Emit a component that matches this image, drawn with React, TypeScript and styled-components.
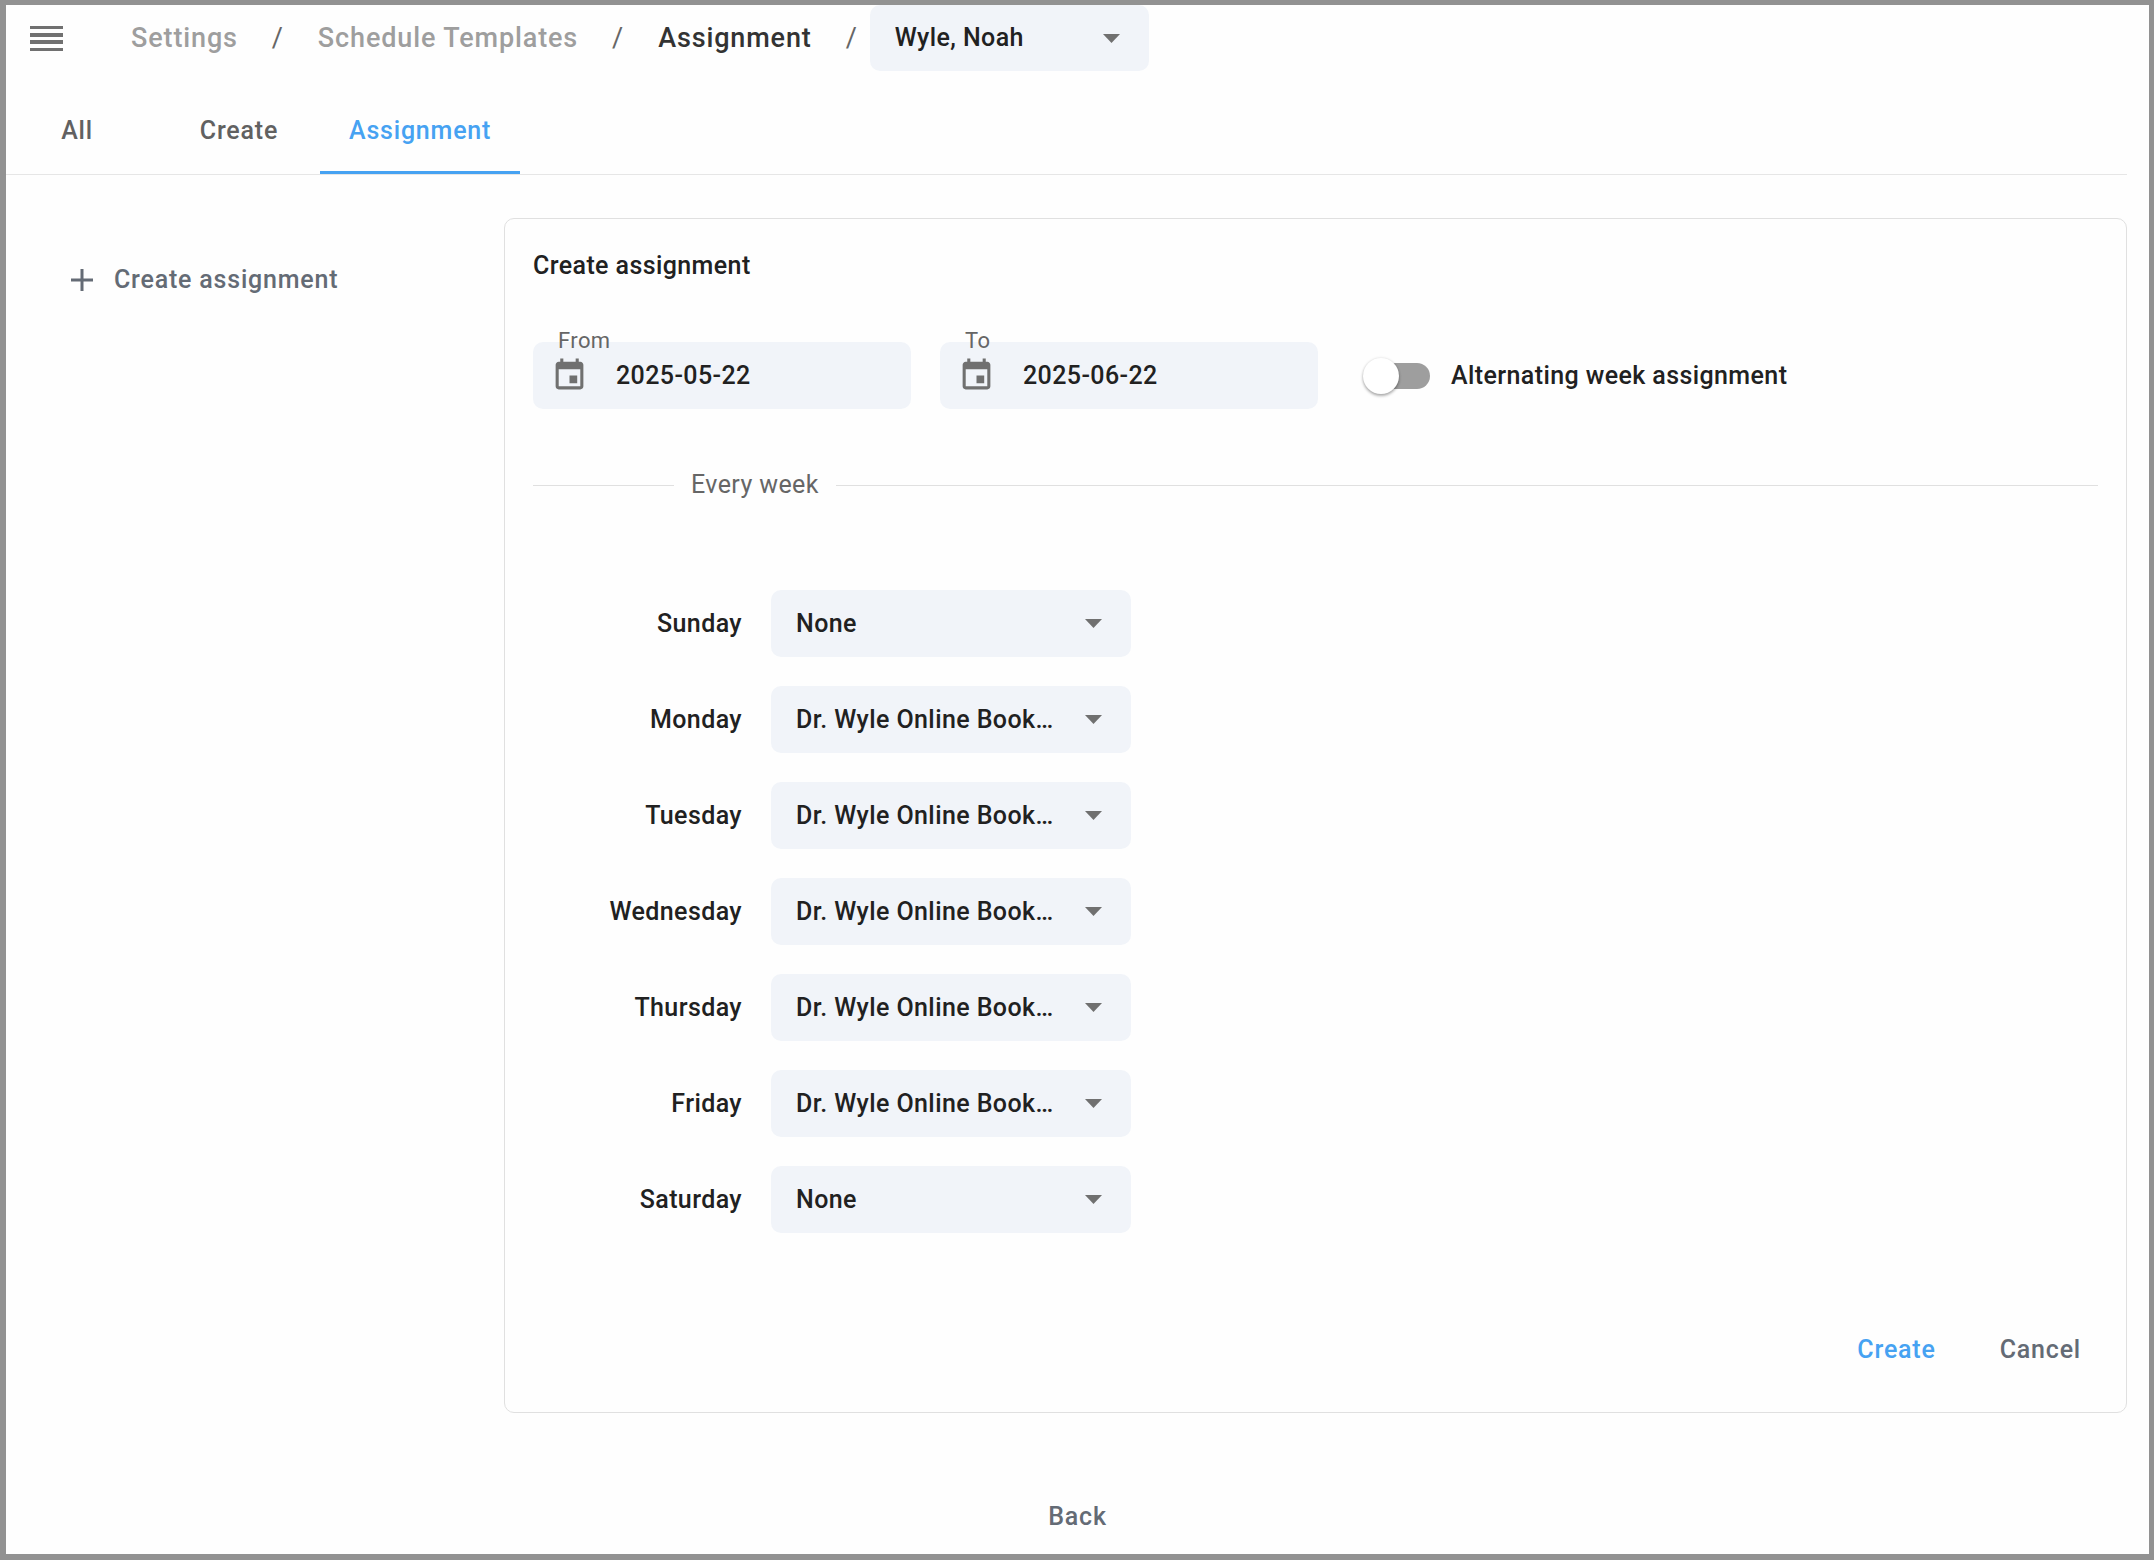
import React, { useId, useState } from "react";
import styled, { createGlobalStyle } from "styled-components";

const color = {
  frame: "#929292",
  page: "#fefefe",
  line: "#e0e0e0",
  field: "#f1f4f9",
  text: "#212121",
  heading: "#333333",
  muted: "#666666",
  faint: "#9e9e9e",
  icon: "#707070",
  button: "#646b75",
  accent: "#46a2f2",
};

// Tracking of the type scale: body copy, and navigation or button labels.
const tracking = {
  body: "0.016em",
  label: "0.032em",
};

const GlobalStyle = createGlobalStyle`
  * { box-sizing: border-box; }
  body {
    margin: 0;
    background: ${color.page};
    color: ${color.text};
    font: 500 25px/36px Roboto, "Liberation Sans", sans-serif;
    letter-spacing: ${tracking.body};
  }
  button, input, select { font: inherit; color: inherit; letter-spacing: inherit; }
`;

const Page = styled.div`
  display: flex;
  flex-direction: column;
  min-height: 100vh;
  border: solid ${color.frame};
  border-width: 5px 5px 6px 6px;
`;

const Header = styled.header`
  display: flex;
  align-items: center;
  padding-left: 24px;
`;

const MenuButton = styled.button`
  display: flex;
  padding: 0;
  border: 0;
  background: none;
  color: ${color.icon};
  margin-right: 68px;
  cursor: pointer;
`;

const Crumbs = styled.nav`
  display: flex;
  align-items: center;
  gap: 34px;
  margin-right: 12px;
  font-size: 27px;
  letter-spacing: ${tracking.label};
`;

const CrumbLink = styled.a`
  color: ${color.faint};
  text-decoration: none;
`;

const CrumbCurrent = styled.span`
  color: ${color.heading};
`;

const Slash = styled.span`
  color: ${color.muted};
  font-weight: 400;
`;

const Tabs = styled.div`
  margin: 17px 22px 0 0;
  border-bottom: 1px solid #e6e6e6;
`;

const TabList = styled.div`
  display: flex;
  margin-left: -10px;
`;

const Tab = styled.button<{ $active?: boolean }>`
  min-width: 162px;
  height: 86px;
  padding: 3px 29px 0;
  border: 0;
  border-bottom: 3px solid ${(p) => (p.$active ? color.accent : "transparent")};
  background: none;
  color: ${(p) => (p.$active ? color.accent : "#616161")};
  letter-spacing: ${tracking.label};
  cursor: pointer;
`;

const Body = styled.div`
  display: grid;
  grid-template-columns: 498px minmax(0, 1fr);
  padding: 43px 22px 0 0;
`;

const Sidebar = styled.aside`
  padding: 29px 0 0 48px;
`;

const TextButton = styled.button<{ $accent?: boolean }>`
  display: inline-flex;
  align-items: center;
  gap: 21px;
  height: 65px;
  padding: 0 17px;
  border: 0;
  border-radius: 10px;
  background: none;
  color: ${(p) => (p.$accent ? color.accent : color.button)};
  letter-spacing: ${tracking.label};
  cursor: pointer;
`;

const Card = styled.form`
  padding: 29px 28px 30px;
  border: 1px solid ${color.line};
  border-radius: 10px;
`;

const CardTitle = styled.h2`
  margin: 0 0 58px;
  font: inherit;
`;

const FieldRow = styled.div`
  display: flex;
  align-items: center;
  gap: 29px;
`;

const Field = styled.div`
  position: relative;
  display: flex;
  align-items: center;
  gap: 28px;
  width: 378px;
  height: 67px;
  padding: 0 18px;
  border-radius: 10px;
  background: ${color.field};
  color: ${color.icon};
`;

const FieldLabel = styled.label`
  position: absolute;
  top: -13px;
  left: 25px;
  color: ${color.muted};
  font-size: 22px;
  font-weight: 400;
  line-height: 24px;
`;

const FieldInput = styled.input`
  flex: 1;
  min-width: 0;
  padding: 0;
  border: 0;
  outline: 0;
  background: none;
  color: ${color.text};
`;

const SwitchLabel = styled.label`
  display: flex;
  align-items: center;
  gap: 21px;
  padding-left: 18px;
  cursor: pointer;
`;

const Switch = styled.input`
  appearance: none;
  position: relative;
  width: 65px;
  height: 26px;
  margin: 0;
  border-radius: 13px;
  background: ${color.faint};
  cursor: pointer;

  &::before {
    content: "";
    position: absolute;
    top: -5px;
    left: -2px;
    width: 36px;
    height: 36px;
    border-radius: 50%;
    background: #fff;
    box-shadow: 0 2px 3px rgba(0, 0, 0, 0.3), 0 0 3px rgba(0, 0, 0, 0.12);
  }

  &:checked {
    background: ${color.accent};
  }

  &:checked::before {
    left: 31px;
  }
`;

const Divider = styled.div`
  display: flex;
  align-items: center;
  gap: 17px;
  margin: 58px 0 87px;
  color: ${color.muted};
  font-weight: 400;

  &::before,
  &::after {
    content: "";
    height: 1px;
    background: ${color.line};
  }

  &::before {
    width: 141px;
  }

  &::after {
    flex: 1;
  }
`;

const DayGrid = styled.div`
  display: grid;
  grid-template-columns: 209px 360px;
  gap: 29px;
  align-items: center;
`;

const DayLabel = styled.label`
  text-align: right;
`;

const SelectBox = styled.div<{ $width: number }>`
  position: relative;
  width: ${(p) => p.$width}px;
  color: ${color.icon};

  svg {
    position: absolute;
    top: 29px;
    right: 29px;
    pointer-events: none;
  }
`;

const SelectControl = styled.select<{ $height: number }>`
  display: block;
  appearance: none;
  width: 100%;
  height: ${(p) => p.$height}px;
  padding: 0 76px 0 25px;
  border: 0;
  border-radius: 10px;
  background: ${color.field};
  color: ${color.text};
  overflow: hidden;
  text-overflow: ellipsis;
  white-space: nowrap;
  cursor: pointer;
`;

const Actions = styled.div`
  display: flex;
  justify-content: flex-end;
  gap: 30px;
  margin-top: 84px;
`;

const Footer = styled.footer`
  display: flex;
  justify-content: center;
  padding-top: 71px;
`;

function MenuIcon() {
  return (
    <svg width="33" height="25" viewBox="0 0 33 25" fill="currentColor" aria-hidden="true">
      <path d="M0 0h33v3H0zM0 7h33v4H0zM0 14h33v4H0zM0 22h33v3H0z" />
    </svg>
  );
}

function PlusIcon() {
  return (
    <svg width="22" height="22" viewBox="0 0 22 22" fill="currentColor" aria-hidden="true">
      <path d="M9.5 0h3v9.5H22v3h-9.5V22h-3v-9.5H0v-3h9.5z" />
    </svg>
  );
}

function CalendarIcon() {
  return (
    <svg width="37" height="37" viewBox="0 0 24 24" fill="currentColor" aria-hidden="true">
      <path d="M17 12h-5v5h5v-5zM16 1v2H8V1H6v2H5c-1.11 0-1.99.9-1.99 2L3 19c0 1.1.89 2 2 2h14c1.1 0 2-.9 2-2V5c0-1.1-.9-2-2-2h-1V1h-2zm3 18H5V8h14v11z" />
    </svg>
  );
}

function ArrowIcon() {
  return (
    <svg width="17" height="9" viewBox="0 0 17 9" fill="currentColor" aria-hidden="true">
      <path d="M0 0h17L8.5 9z" />
    </svg>
  );
}

type DropdownProps = {
  id?: string;
  label?: string;
  width: number;
  height?: number;
  options: string[];
  initial: string;
};

function Dropdown({ id, label, width, height = 67, options, initial }: DropdownProps) {
  return (
    <SelectBox $width={width}>
      <SelectControl id={id} aria-label={label} $height={height} defaultValue={initial}>
        {options.map((option) => (
          <option key={option}>{option}</option>
        ))}
      </SelectControl>
      <ArrowIcon />
    </SelectBox>
  );
}

function DateField({ label, initial }: { label: string; initial: string }) {
  const id = useId();
  const [value, setValue] = useState(initial);
  return (
    <Field>
      <FieldLabel htmlFor={id}>{label}</FieldLabel>
      <CalendarIcon />
      <FieldInput id={id} type="text" value={value} onChange={(e) => setValue(e.target.value)} />
    </Field>
  );
}

const NONE = "None";
const ONLINE = "Dr. Wyle Online Booking";

const days = [
  { name: "Sunday", template: NONE },
  { name: "Monday", template: ONLINE },
  { name: "Tuesday", template: ONLINE },
  { name: "Wednesday", template: ONLINE },
  { name: "Thursday", template: ONLINE },
  { name: "Friday", template: ONLINE },
  { name: "Saturday", template: NONE },
];

const tabs = ["All", "Create", "Assignment"];

export default function App() {
  const [activeTab, setActiveTab] = useState("Assignment");

  return (
    <Page>
      <GlobalStyle />
      <Header>
        <MenuButton type="button" aria-label="Menu">
          <MenuIcon />
        </MenuButton>
        <Crumbs aria-label="Breadcrumb">
          <CrumbLink href="#settings">Settings</CrumbLink>
          <Slash>/</Slash>
          <CrumbLink href="#templates">Schedule Templates</CrumbLink>
          <Slash>/</Slash>
          <CrumbCurrent>Assignment</CrumbCurrent>
          <Slash>/</Slash>
        </Crumbs>
        <Dropdown label="Provider" width={279} height={66} options={["Wyle, Noah"]} initial="Wyle, Noah" />
      </Header>

      <Tabs>
        <TabList role="tablist">
          {tabs.map((tab) => (
            <Tab
              key={tab}
              type="button"
              role="tab"
              aria-selected={tab === activeTab}
              $active={tab === activeTab}
              onClick={() => setActiveTab(tab)}
            >
              {tab}
            </Tab>
          ))}
        </TabList>
      </Tabs>

      <Body>
        <Sidebar>
          <TextButton type="button">
            <PlusIcon />
            Create assignment
          </TextButton>
        </Sidebar>

        <Card onSubmit={(e) => e.preventDefault()}>
          <CardTitle>Create assignment</CardTitle>
          <FieldRow>
            <DateField label="From" initial="2025-05-22" />
            <DateField label="To" initial="2025-06-22" />
            <SwitchLabel>
              <Switch type="checkbox" role="switch" />
              Alternating week assignment
            </SwitchLabel>
          </FieldRow>

          <Divider>Every week</Divider>

          <DayGrid>
            {days.map((day) => (
              <React.Fragment key={day.name}>
                <DayLabel htmlFor={day.name}>{day.name}</DayLabel>
                <Dropdown id={day.name} width={360} options={[NONE, ONLINE]} initial={day.template} />
              </React.Fragment>
            ))}
          </DayGrid>

          <Actions>
            <TextButton type="submit" $accent>
              Create
            </TextButton>
            <TextButton type="button">Cancel</TextButton>
          </Actions>
        </Card>
      </Body>

      <Footer>
        <TextButton type="button">Back</TextButton>
      </Footer>
    </Page>
  );
}
